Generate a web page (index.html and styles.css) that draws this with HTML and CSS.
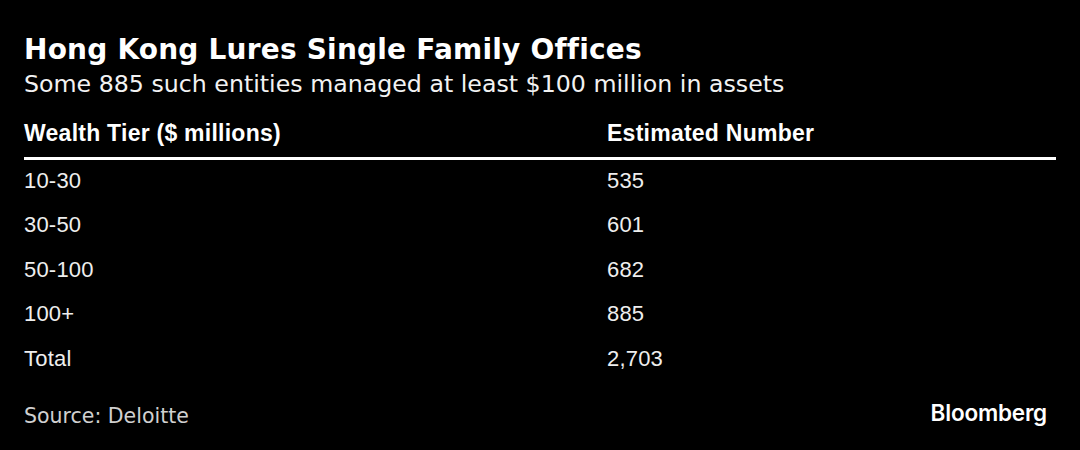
FILE: index.html
```html
<!DOCTYPE html>
<html>
<head>
<meta charset="utf-8">
<link rel="stylesheet" href="styles.css">
</head>
<body>
<div class="chart">
  <header class="head">
    <h1 class="title">Hong Kong Lures Single Family Offices</h1>
    <p class="subtitle">Some 885 such entities managed at least $100 million in assets</p>
  </header>
  <div class="table">
    <div class="row header-row">
      <div class="col1">Wealth Tier ($ millions)</div>
      <div class="col2">Estimated Number</div>
    </div>
    <div class="row"><div class="col1">10-30</div><div class="col2">535</div></div>
    <div class="row"><div class="col1">30-50</div><div class="col2">601</div></div>
    <div class="row"><div class="col1">50-100</div><div class="col2">682</div></div>
    <div class="row"><div class="col1">100+</div><div class="col2">885</div></div>
    <div class="row"><div class="col1">Total</div><div class="col2">2,703</div></div>
  </div>
  <footer class="foot">
    <span class="source">Source: Deloitte</span>
    <span class="brand">Bloomberg</span>
  </footer>
</div>
</body>
</html>
```
FILE: styles.css
```css
html, body {
  margin: 0;
  padding: 0;
  background: #000;
  width: 1080px;
  height: 450px;
  overflow: hidden;
}
.chart {
  padding: 34px 24px 0 24px;
  color: #fff;
}
.title {
  margin: 0;
  font-family: "DejaVu Sans", sans-serif;
  font-weight: bold;
  font-size: 28px;
  line-height: 32px;
  letter-spacing: 0.2px;
}
.subtitle {
  margin: 0;
  font-family: "DejaVu Sans", sans-serif;
  font-size: 23.7px;
  line-height: 37px;
  color: #f2f2f2;
}
.table {
  margin-top: 10px;
}
.row {
  display: grid;
  grid-template-columns: 583px 1fr;
  font-family: "Liberation Sans", Arial, sans-serif;
  font-size: 22px;
  letter-spacing: 0.2px;
  height: 44.4px;
  line-height: 41px;
  color: #eee;
}
.header-row {
  font-weight: bold;
  font-size: 23px;
  letter-spacing: 0.25px;
  color: #fff;
  height: 44px;
  line-height: 40px;
  border-bottom: 3px solid #fff;
}
.foot {
  display: flex;
  justify-content: space-between;
  align-items: flex-start;
  margin-top: 19px;
  padding-right: 9px;
}
.source {
  font-family: "DejaVu Sans", sans-serif;
  font-size: 20.5px;
  line-height: 30px;
  color: #d0d0d0;
}
.brand {
  font-family: Inter, "DejaVu Sans", sans-serif;
  font-weight: 600;
  font-size: 22.5px;
  line-height: 30px;
  margin-top: -3px;
  letter-spacing: -0.2px;
  color: #fff;
}
```
